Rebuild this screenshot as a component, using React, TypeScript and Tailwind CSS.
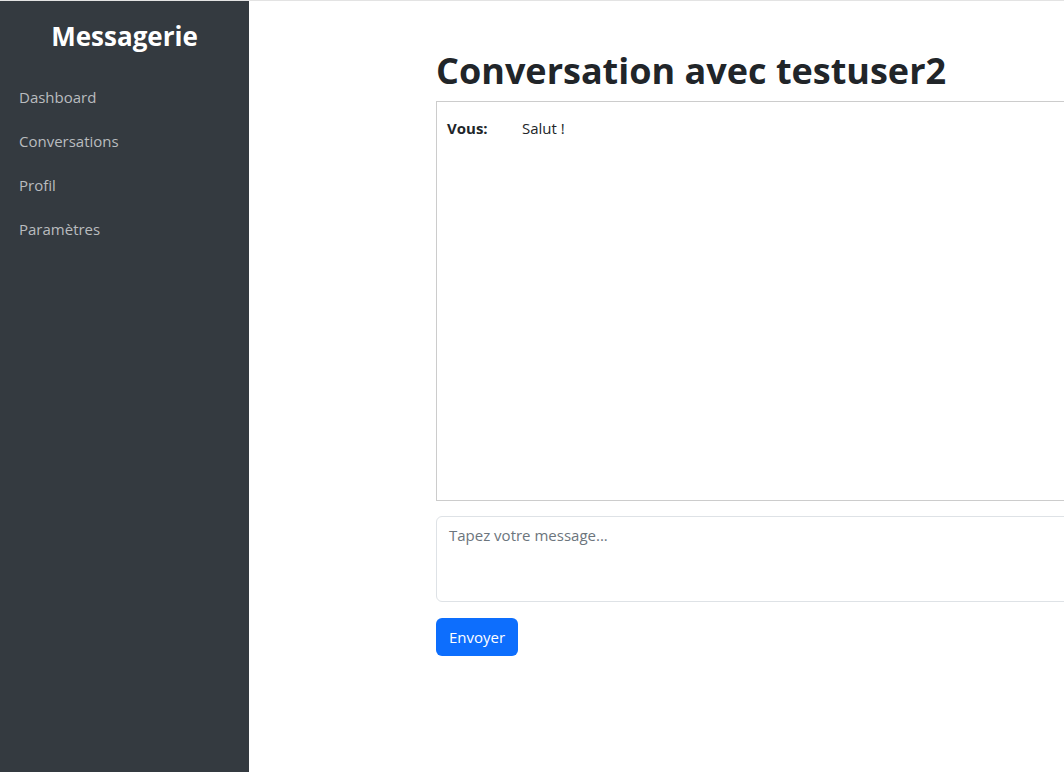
export default function App() {
   return (
      <div
         className="flex h-[772px] w-[1064px] overflow-hidden border-t border-[#e3e3e3] bg-white text-[#212529]"
         style={{ fontFamily: '"Open Sans", "Noto Sans", sans-serif' }}
      >
         <aside className="flex w-[249px] shrink-0 flex-col bg-[#343a40] px-[19px] pt-[17px]">
            <h3 className="text-center text-[26px] font-bold leading-[36px] text-white">Messagerie</h3>
            <nav className="mt-[31px] flex flex-col gap-[20px] text-[15px] leading-6 text-[#b9bcbf]">
               <a href="#">Dashboard</a>
               <a href="#">Conversations</a>
               <a href="#">Profil</a>
               <a href="#">Paramètres</a>
            </nav>
         </aside>

         <main className="min-w-0 flex-1 pl-[187px] pt-[47px]">
            <div className="w-[760px]">
               <h1 className="text-[36px] font-bold leading-[46px]">Conversation avec testuser2</h1>
               <div className="mt-[7px] h-[400px] border border-[#cccccc] px-[10px] py-[14px]">
                  <div className="flex text-[15px] leading-6">
                     <span className="w-[75px] font-bold">Vous:</span>
                     <span>Salut !</span>
                  </div>
               </div>
               <textarea
                  placeholder="Tapez votre message..."
                  className="mt-[15px] block h-[86px] w-full resize-none rounded-md border border-[#dee2e6] px-3 py-[6px] text-[15px] leading-6 placeholder:text-[#6c757d] focus:outline-none"
               />
               <button className="mt-[16px] h-[38px] rounded-md bg-[#0d6efd] px-[13px] text-[15px] text-white">
                  Envoyer
               </button>
            </div>
         </main>
      </div>
   );
}
